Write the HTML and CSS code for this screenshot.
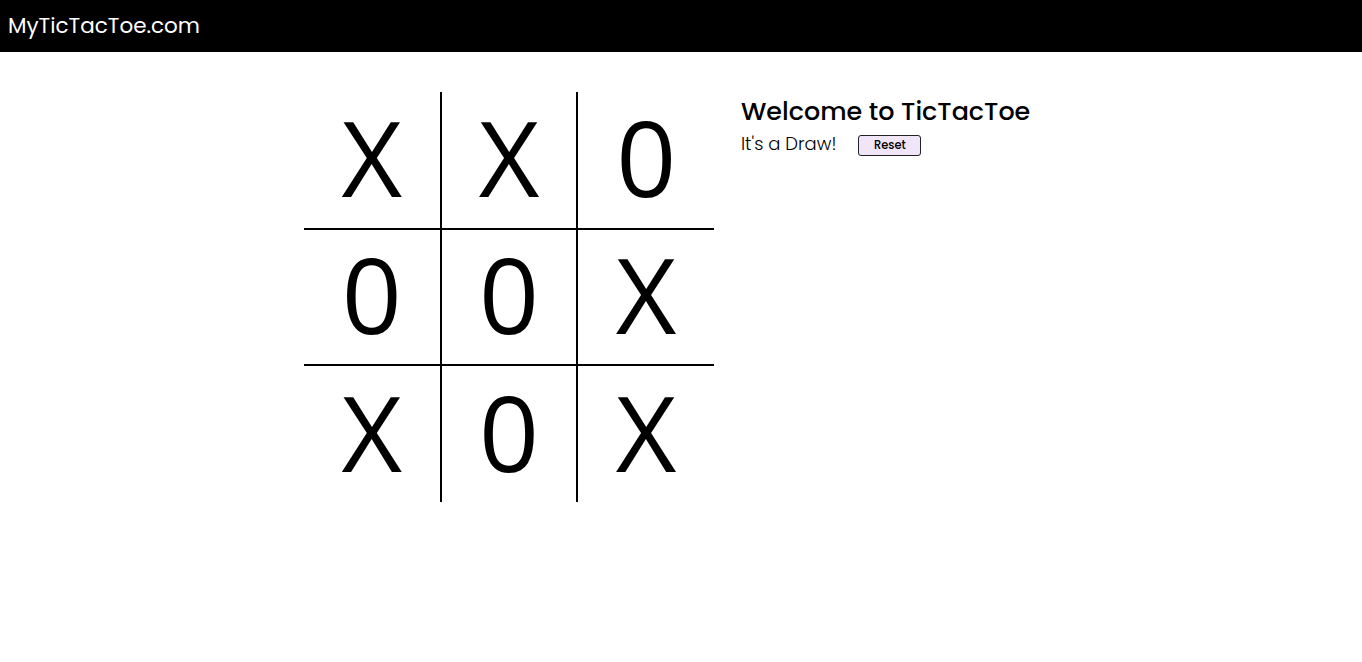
FILE: index.html
```html
<!DOCTYPE html>
<html lang="en">
<head>
<meta charset="utf-8">
<title>MyTicTacToe.com</title>
<link rel="stylesheet" href="styles.css">
</head>
<body>
<header class="topbar">
  <span class="brand">MyTicTacToe.com</span>
</header>
<main class="game">
  <div class="board">
    <div class="cell">X</div>
    <div class="cell">X</div>
    <div class="cell">0</div>
    <div class="cell">0</div>
    <div class="cell">0</div>
    <div class="cell">X</div>
    <div class="cell">X</div>
    <div class="cell">0</div>
    <div class="cell">X</div>
  </div>
  <section class="info">
    <h1 class="title">Welcome to TicTacToe</h1>
    <div class="status-row">
      <span class="status">It's a Draw!</span>
      <button class="reset" type="button">Reset</button>
    </div>
  </section>
</main>
</body>
</html>
```
FILE: styles.css
```css
* { box-sizing: border-box; }
html, body { margin: 0; padding: 0; background: #fff; }
body { font-family: "Poppins", "Inter", "Noto Sans", sans-serif; color: #000; }

.topbar {
  height: 52px;
  background: #000;
  display: flex;
  align-items: center;
  padding: 0 8px;
}
.brand {
  color: #fff;
  font-size: 21.5px;
  font-weight: 400;
  line-height: 1;
}

.game {
  display: flex;
  justify-content: center;
  gap: 27px;
  padding-top: 40px;
}

.board {
  width: 410px;
  height: 410px;
  display: grid;
  grid-template-columns: repeat(3, 1fr);
  grid-template-rows: repeat(3, 1fr);
}
.cell {
  display: flex;
  align-items: center;
  justify-content: center;
  border: 1px solid #000;
  padding-bottom: 6px;
  font-family: "Open Sans", "Noto Sans", sans-serif;
  font-size: 105px;
  line-height: 1;
}
.cell:nth-child(-n+3) { border-top: none; }
.cell:nth-child(n+7) { border-bottom: none; }
.cell:nth-child(3n+1) { border-left: none; }
.cell:nth-child(3n) { border-right: none; }

.info { width: 317px; }
.title {
  margin: 3px 0 0;
  font-size: 25.4px;
  font-weight: 500;
  line-height: 32px;
}
.status-row {
  display: flex;
  align-items: center;
  gap: 22px;
  margin-top: 5px;
}
.status {
  font-size: 18px;
  font-weight: 300;
  line-height: 24px;
}
.reset {
  width: 63px;
  height: 21px;
  padding: 0;
  margin-top: 2px;
  background: #f1e5f9;
  border: 1px solid #222;
  border-radius: 3px;
  font-family: inherit;
  font-size: 11.5px;
  font-weight: 500;
  color: #000;
}
```
